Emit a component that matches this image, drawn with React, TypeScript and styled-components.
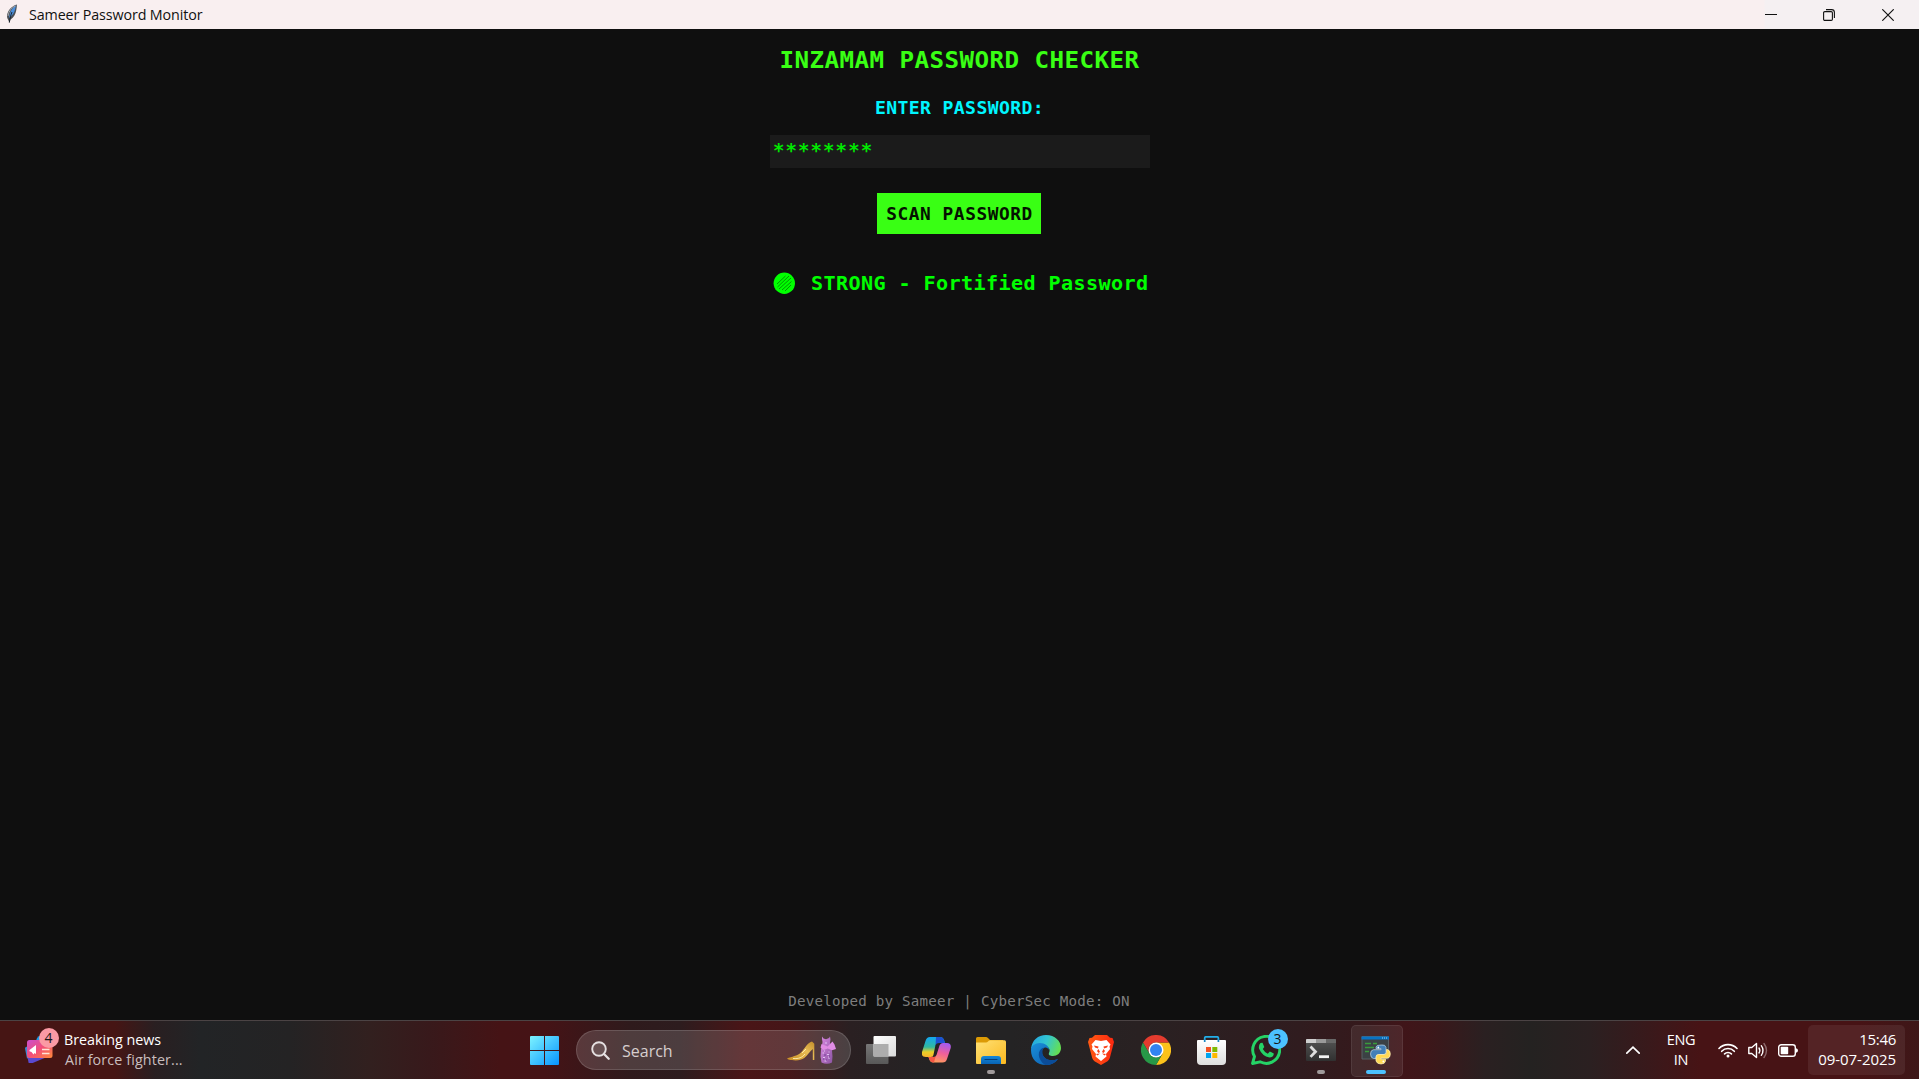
import React from 'react';
import styled, { createGlobalStyle } from 'styled-components';

const GlobalStyle = createGlobalStyle`
  * { box-sizing: border-box; }
  body { margin: 0; background: #0f0f0f; overflow: hidden; }
  svg { display: block; flex: none; }
`;

const uiFont = `'Open Sans', 'Noto Sans', sans-serif`;
const monoFont = `'DejaVu Sans Mono', 'Liberation Mono', monospace`;

const Desktop = styled.div`
  width: 1919px;
  height: 1079px;
  display: flex;
  flex-direction: column;
  font-family: ${uiFont};
`;

const TitleBar = styled.header`
  height: 29px;
  flex: none;
  display: flex;
  align-items: center;
  padding-right: 2px;
  background: linear-gradient(90deg, #f9eff0 0 1764px, #f5f0f2 1765px);
`;

const TitleFeather = styled.div`
  margin: -2px 0 0 6px;
`;

const WindowTitle = styled.span`
  margin-left: 11px;
  color: #111;
  font-size: 14.3px;
  line-height: 20px;
  letter-spacing: -0.12px;
  white-space: nowrap;
`;

const WindowControls = styled.div`
  margin-left: auto;
  display: flex;
  height: 28px;
`;

const ControlButton = styled.button`
  width: 58.5px;
  padding: 0;
  border: 0;
  background: none;
  display: flex;
  align-items: center;
  justify-content: center;
`;

const AppBody = styled.main`
  flex: 1;
  min-height: 0;
  padding: 16px 1px 9px 0;
  background: #0f0f0f;
  display: flex;
  flex-direction: column;
  align-items: center;
`;

const Mono = styled.div<{ $size: number; $pitch: number; $bold?: boolean }>`
  margin: 0;
  font-family: ${monoFont};
  font-size: ${(p) => p.$size}px;
  letter-spacing: ${(p) => (p.$pitch - p.$size * 0.602).toFixed(3)}px;
  font-weight: ${(p) => (p.$bold ? 700 : 400)};
  white-space: pre;
`;

const Heading = styled(Mono)`
  line-height: 33px;
  height: 33px;
  padding-left: 1px;
  color: #39ff14;
  transform: scaleY(0.92);
`;

const FieldLabel = styled(Mono)`
  margin-top: 15px;
  padding-left: 1px;
  line-height: 30px;
  color: #00f6ff;
  transform: scaleY(0.95);
`;

const PasswordBox = styled(Mono)`
  margin: 12px 0 0 2px;
  width: 380px;
  height: 33px;
  padding: 0 3px;
  line-height: 31px;
  color: #00e800;
  background: #1b1b1b;
`;

const ScanButton = styled(Mono)`
  margin-top: 25px;
  width: 164px;
  height: 41px;
  padding-left: 1px;
  line-height: 42px;
  text-align: center;
  color: #041200;
  background: #39ff14;
`;

const Result = styled.div`
  margin-top: 34px;
  height: 30px;
  width: 372px;
  display: flex;
  align-items: center;
`;

const ResultText = styled(Mono)`
  margin-left: 16px;
  line-height: 30px;
  color: #00ff00;
`;

const Credit = styled(Mono)`
  margin-top: auto;
  line-height: 20px;
  color: #7e7e7e;
`;

const Taskbar = styled.footer`
  height: 59px;
  flex: none;
  display: flex;
  border-top: 1px solid #4b4344;
  background: linear-gradient(
    90deg,
    #461514 0, #461514 115px, #291f21 155px, #222426 200px, #242324 290px,
    #32201f 370px, #38191b 430px, #451315 500px, #451316 545px, #2f1a1c 630px,
    #2d1c1e 680px, #4a1517 745px, #451618 790px, #2a2022 850px, #242324 930px,
    #242324 1010px, #292122 1140px, #301c1f 1300px, #35191c 1360px,
    #401519 1405px, #3c171a 1430px, #2a2021 1485px, #242221 1530px,
    #2b2021 1590px, #371a1c 1640px, #471315 1700px, #471315 1860px, #3e1718 1919px
  );
`;

const Widgets = styled.div`
  width: 517px;
  display: flex;
  padding-left: 25px;
`;

const NewsIcon = styled.div`
  position: relative;
  width: 28px;
  height: 28px;
  margin-top: 14px;
`;

const Badge = styled.span<{ $color: string; $x: number; $y: number }>`
  position: absolute;
  left: ${(p) => p.$x}px;
  top: ${(p) => p.$y}px;
  width: 20px;
  height: 20px;
  border-radius: 50%;
  background: ${(p) => p.$color};
  color: #171717;
  font-size: 14px;
  line-height: 20px;
  text-align: center;
`;

const NewsText = styled.div`
  margin: 9px 0 0 11px;
  font-size: 14.3px;
  line-height: 20px;
  color: #fff;
  white-space: nowrap;
`;

const Headline = styled.div<{ $dim?: boolean; $track: number }>`
  color: ${(p) => (p.$dim ? '#c9bebe' : '#ffffff')};
  letter-spacing: ${(p) => p.$track}px;
  padding-left: ${(p) => (p.$dim ? 1 : 0)}px;
`;

const Apps = styled.nav`
  display: flex;
  height: 58px;
`;

const AppSlot = styled.div<{ $active?: boolean }>`
  position: relative;
  width: 55px;
  display: flex;
  align-items: center;
  justify-content: center;
  &::before {
    content: '';
    display: ${(p) => (p.$active ? 'block' : 'none')};
    position: absolute;
    left: 2px;
    top: 4px;
    width: 50px;
    height: 50px;
    border-radius: 5px;
    border: 1px solid rgba(255, 255, 255, 0.08);
    background: rgba(255, 255, 255, 0.075);
  }
  > svg { position: relative; }
`;

const Indicator = styled.span<{ $active?: boolean }>`
  position: absolute;
  top: 49px;
  left: ${(p) => (p.$active ? 17 : 23.5)}px;
  width: ${(p) => (p.$active ? 20 : 8)}px;
  height: 4px;
  border-radius: 2px;
  background: ${(p) => (p.$active ? '#4cc2ff' : '#a09a9b')};
`;

const SearchBox = styled.div`
  width: 275px;
  height: 40px;
  margin: 9px 2.5px 0 4px;
  padding: 0 14px;
  display: flex;
  align-items: center;
  border: 1px solid rgba(255, 255, 255, 0.14);
  border-radius: 20px;
  background: rgba(255, 255, 255, 0.15);
  color: #d6cece;
  font-size: 16px;
`;

const SearchLabel = styled.span`
  margin: 2px auto 0 12px;
`;

const Tray = styled.div`
  margin-left: auto;
  display: flex;
  align-items: flex-start;
  color: #fff;
  font-size: 15px;
  line-height: 20px;
`;

const TrayIcon = styled.div<{ $gap: number }>`
  height: 58px;
  display: flex;
  align-items: center;
  margin-right: ${(p) => p.$gap}px;
`;

const Language = styled.div`
  width: 44px;
  margin: 9px 15px 0 0;
  text-align: center;
  line-height: 20px;
  font-size: 14.5px;
  letter-spacing: -0.3px;
`;

const Clock = styled.div`
  width: 97px;
  height: 50px;
  margin: 4px 14px 0 0;
  padding: 4px 9px 0 0;
  text-align: right;
  border-radius: 5px;
  background: rgba(255, 255, 255, 0.07);
  white-space: nowrap;
`;

const ClockLine = styled.div<{ $track: number }>`
  letter-spacing: ${(p) => p.$track}px;
`;

const Feather = () => (
  <svg width="12" height="20" viewBox="0 0 12 20">
    <path d="M10.8.5C7 1.5 2.7 5 1.3 10c-.6 2.5-.1 4.6 1 6L3.4 19l1-3.3C8 13.500 9.600 10 10.200 6.500 10.600 4 11 2 10.800.5Z" fill="#4a4f56" />
    <path d="M10 1.500C7 3 4.700 6 3.600 11l-.5 3C6.500 11.500 8.700 8 9.200 5Z" fill="#4a8edb" />
    <path d="M9.500 1.800C5.500 3.600 2.700 7 2 12" fill="none" stroke="#a5a9ae" strokeWidth="1" />
    <path d="M6 8C4.800 11 4 14 3.300 18.500" fill="none" stroke="#111820" strokeWidth=".9" />
  </svg>
);

const NewsArt = () => (
  <svg width="28" height="28" viewBox="0 0 28 28">
    <defs>
      <linearGradient id="news" x1="0" y1="0" x2="1" y2="1">
        <stop offset="0" stopColor="#c94fd0" /><stop offset=".5" stopColor="#f34f79" /><stop offset="1" stopColor="#ff8a38" />
      </linearGradient>
    </defs>
    <path d="M1 13h6l15 9-16 6.700a2 2 0 0 1-2.500-1.300Z" fill="#5a4ad0" />
    <path d="M0 13.500q0-2 3-2l2 11-3 1Z" fill="#3b8bd4" />
    <path d="M11 6q1-6 7-6v8Z" fill="#1c9de8" />
    <rect x="2" y="5" width="25.500" height="18" rx="2.500" fill="url(#news)" />
    <path d="m4.500 15 6.500-5v9l-1.500-1-1 1.500-2-2.500-2-.7Z" fill="#fff" />
    <path d="M17 14.500h7.500M17 18.500h7.500" stroke="#ffe3d6" strokeWidth="1.600" />
  </svg>
);

const StartIcon = () => (
  <svg width="29" height="29" viewBox="0 0 29 29">
    <defs>
      <linearGradient id="win" x1="0" y1="0" x2="29" y2="29" gradientUnits="userSpaceOnUse">
        <stop offset="0" stopColor="#7df3ff" /><stop offset="1" stopColor="#0794ff" />
      </linearGradient>
    </defs>
    <path d="M0 1q0-1 1-1h13v14H0ZM15 0h13q1 0 1 1v13H15ZM0 15h14v14H1q-1 0-1-1ZM15 15h14v13q0 1-1 1H15Z" fill="url(#win)" />
  </svg>
);

const SearchIcon = () => (
  <svg width="19" height="19" viewBox="0 0 19 19" fill="none" stroke="#e5e0e1">
    <circle cx="8" cy="8" r="6.800" strokeWidth="1.900" fill="rgba(255,255,255,.12)" />
    <path d="m13 13 4.700 4.700" strokeWidth="2.300" strokeLinecap="round" />
  </svg>
);

const FashionArt = () => (
  <svg width="49" height="29" viewBox="0 0 49 29">
    <defs>
      <linearGradient id="shoe" x1="0" y1="1" x2="1" y2="0">
        <stop offset="0" stopColor="#c88c22" /><stop offset=".6" stopColor="#e8bd55" /><stop offset="1" stopColor="#c28d2a" />
      </linearGradient>
      <linearGradient id="dress" x1="0" y1="0" x2="1" y2="1">
        <stop offset="0" stopColor="#d988e2" /><stop offset="1" stopColor="#8c55a3" />
      </linearGradient>
    </defs>
    <path d="M0 22.500C5 20.500 10 20 14 16.500 18 12.500 20 7 25 5.500l2.300 2.300V24H25.800V13c-3 2-5 6.500-8.500 9-3 2.200-8.300 3-12.300 2-2 0-4-.5-5-1.500Z" fill="url(#shoe)" />
    <path d="M6 22.500c6 .5 9-1 12-4.500M15 17l4-4" stroke="#fff0b0" fill="none" strokeWidth=".9" />
    <path d="m35 .5 1.500 2 2.500.7 3-1.200L43 .5l.5 3L43 6.500l1 4 1 4 .5 6-.5 6q-5 2.500-10.500 0l-1-6 .5-7 1-4 .5-3.500-.5-3Z" fill="url(#dress)" />
    <path d="m40.500 10.500 5-5 2 3 1.500 4.500-4 1.200-4.300-1.700-4.200 1.500-3-2.500 1-3.500Z" fill="#e08ce4" />
    <path d="M35.500 17h1.500m3 1.500h2m-6 3h2m3.500 1h1m-5 2.500h2m2-9h1M38 7h2m-3 8h1m3 6h1" stroke="#e1c2f5" strokeWidth="1" />
    <path d="M37 19h2m-3 4h1m5-3h1m-4 4h1" stroke="#70439a" strokeWidth="1" />
  </svg>
);

const TaskViewIcon = () => (
  <svg width="30" height="28" viewBox="0 0 30 28">
    <defs>
      <linearGradient id="tv" x1="0" y1="0" x2="1" y2="1"><stop offset="0" stopColor="#fff" /><stop offset="1" stopColor="#dadada" /></linearGradient>
      <linearGradient id="tvb" x1="0" y1="0" x2="0" y2="1"><stop offset="0" stopColor="#777" /><stop offset="1" stopColor="#585858" /></linearGradient>
    </defs>
    <rect y="8" width="22.500" height="20" rx="1" fill="url(#tvb)" />
    <rect x="7.500" width="22.500" height="20.500" rx="1" fill="url(#tv)" />
    <path d="M7.500 8h15v12.500h-15Z" fill="#adadad" />
  </svg>
);

const CopilotIcon = () => (
  <svg width="29" height="26" viewBox="0 0 29 26">
    <defs>
      <linearGradient id="ca" x1="0" y1="0" x2="0" y2="1"><stop offset="0" stopColor="#13a7f2" /><stop offset=".5" stopColor="#31b9a0" /><stop offset=".75" stopColor="#e9cf28" /><stop offset="1" stopColor="#f9b32b" /></linearGradient>
      <linearGradient id="cb" x1=".7" y1="0" x2=".4" y2="1"><stop offset="0" stopColor="#a45bf0" /><stop offset=".5" stopColor="#ee5f9b" /><stop offset="1" stopColor="#ff9a5c" /></linearGradient>
    </defs>
    <path d="M8 0h10q3 0 4 3l1 3h-4q-3 0-4 3l-3 9q-1 2-3 2H4q-5 0-4-5L3.500 4Q4.600 0 8 0Z" fill="url(#ca)" />
    <path d="M14 0h4q3 0 4 3l1 3h-5q-3 0-4.500 3Z" fill="#1d50d2" />
    <path d="M21 6h4q4.500 0 3.700 5L25 22q-1 3.500-4.500 3.500H11q-3 0-4-4L6.500 20H10q3 0 4-3l3-9q1-2 4-2Z" fill="url(#cb)" />
    <path d="M6.500 20H10q3 0 4-2l-2 7.500q-3.500 0-4.700-3.500Z" fill="#f55745" />
    <path d="M13.500 8q1-2 3.500-2h2.500q-1.500 1-2 2.500L14.500 18q-.7 2-3.500 2Z" fill="#252326" />
  </svg>
);

const FolderIcon = () => (
  <svg width="30" height="27" viewBox="0 0 30 27">
    <defs>
      <linearGradient id="fold" x1="0" y1="0" x2="1" y2="1"><stop offset="0" stopColor="#ffe176" /><stop offset="1" stopColor="#fbb91f" /></linearGradient>
      <linearGradient id="foldb" x1="0" y1="0" x2="0" y2="1"><stop offset="0" stopColor="#1687d9" /><stop offset="1" stopColor="#0864b5" /></linearGradient>
    </defs>
    <path d="M0 1.500Q0 0 1.500 0H10q1 0 2 1l2 2h13v6H0Z" fill="#dc9a05" />
    <path d="M0 5.500h10q1.300 0 2-1t2-1.200h14.500Q30 3.300 30 5v21q0 1-1 1H1q-1 0-1-1Z" fill="url(#fold)" />
    <path d="M5 27v-5q0-3 3-3h14q3 0 3 3v5Z" fill="url(#foldb)" />
    <path d="M9 22.500h12" stroke="#063f7b" strokeWidth="1.200" strokeLinecap="round" />
  </svg>
);

const EdgeIcon = () => (
  <svg width="30" height="30" viewBox="0 0 30 30">
    <defs>
      <linearGradient id="eg" x1="0" y1=".2" x2="1" y2=".5"><stop offset="0" stopColor="#22a5e2" /><stop offset=".5" stopColor="#33c5d1" /><stop offset="1" stopColor="#64df53" /></linearGradient>
      <linearGradient id="eb" x1="0" y1="0" x2="1" y2="1"><stop offset="0" stopColor="#1a8fda" /><stop offset="1" stopColor="#0c5bad" /></linearGradient>
    </defs>
    <path d="M0 14C1 5 7 0 15 0c9 0 15 6 15 13 0 5-4 8-8 8-3 0-5-1-4-3 2-4-1-7-5-7C7 9 2 11 0 14Z" fill="url(#eg)" />
    <path d="M0 15c0-4 4-7 9-7 5 0 9 3 9 7-1-2-3-3-5-2-3 2-3 6 0 9 3 4 9 4 14 2-3 4-7 6-12 6C6 30 0 24 0 15Z" fill="url(#eb)" />
    <path d="M12.500 12.500C6 15 6 24 14 30h1c5 0 9-2 12-6-8 3-15 0-15.500-6-.2-2 .3-4 1-5.500Z" fill="#0b4c98" />
  </svg>
);

const BraveIcon = () => (
  <svg width="26" height="30" viewBox="0 0 26 30">
    <defs><linearGradient id="br"><stop offset="0" stopColor="#ff5a13" /><stop offset="1" stopColor="#fb2810" /></linearGradient></defs>
    <path d="M7 0h12l3 2.800 2.500.3L26 7l-.8 3-3.400 13q-.6 2-2.300 3.200L13 30l-6.500-3.800Q4.800 25 4.200 23L.8 10 0 7l1.500-3.900L4 2.800Z" fill="url(#br)" />
    <path d="m7.500 5 5.500 1 5.500-1 4 4.500-1 2 .5 2.500-4 5 .5 2.500L13 26l-5.500-4.500L8 19l-4-5 .5-2.500-1-2Z" fill="#fff" />
    <path d="m6 10.500 4.500 1-.5 2-3-1ZM20 10.500l-4.500 1 .5 2 3-1ZM10.500 14l1.500 3-1.500 1-1.500-2ZM15.500 14 14 17l1.500 1 1.500-2ZM8 19l4-.5-2.500 2ZM18 19l-4-.5 2.500 2Z" fill="#fa4219" />
  </svg>
);

const ChromeIcon = () => (
  <svg width="30" height="30" viewBox="0 0 48 48">
    <path d="M24 12h20.800A24 24 0 0 1 24 48l10.400-18Z" fill="#fcc21b" />
    <path d="M3.200 12 13.600 30A12 12 0 0 1 24 12h20.800A24 24 0 0 0 3.200 12Z" fill="#e33b2e" />
    <path d="M3.200 12 13.600 30A12 12 0 0 0 34.400 30L24 48A24 24 0 0 1 3.200 12Z" fill="#279847" />
    <circle cx="24" cy="24" r="12" fill="#fff" />
    <circle cx="24" cy="24" r="9.600" fill="#3183f1" />
  </svg>
);

const StoreIcon = () => (
  <svg width="29" height="29" viewBox="0 0 29 29">
    <defs><linearGradient id="st" x1="0" y1="0" x2="0" y2="1"><stop offset="0" stopColor="#fff" /><stop offset="1" stopColor="#dedede" /></linearGradient></defs>
    <path d="M7.700 6V2q0-1.200 1.200-1.200h11.300q1.200 0 1.200 1.200v4" fill="none" stroke="#22aee8" strokeWidth="1.700" />
    <path d="M0 5q0-1 1-1h27q1 0 1 1v20q0 4-4 4H4q-4 0-4-4Z" fill="url(#st)" />
    <path d="M7.700 3.500v2.500M21.400 3.500v2.500" stroke="#1688c5" strokeWidth="1.700" />
    <path d="M9 11h5v5H9Z" fill="#f25022" /><path d="M15.300 11h5v5h-5Z" fill="#7fba00" />
    <path d="M9 17h5v5H9Z" fill="#00a4ef" /><path d="M15.300 17h5v5h-5Z" fill="#ffb900" />
  </svg>
);

const WhatsAppIcon = () => (
  <svg width="30" height="30" viewBox="0 0 30 30">
    <path d="m1.500 28.500 2-7A13.500 13.500 0 1 1 9 26.800Z" fill="none" stroke="#25d366" strokeWidth="2.900" strokeLinejoin="round" />
    <path d="m9.500 8 2-.3 1.800 4.200-1.500 2.200q1.700 3.300 5 4.600l2-2.200 4 2q0 3.500-4.300 4Q11 21 8 13.500 7.400 10 9.500 8Z" fill="#25d366" />
  </svg>
);

const TerminalIcon = () => (
  <svg width="30" height="22" viewBox="0 0 30 22">
    <defs><linearGradient id="te" x1="0" y1="0" x2="0" y2="1"><stop offset="0" stopColor="#555" /><stop offset="1" stopColor="#303030" /></linearGradient></defs>
    <rect width="30" height="22" rx="1" fill="url(#te)" />
    <path d="M0 4V1q0-1 1-1h9v4Z" fill="#cfcfcf" /><path d="M10 0h10v4H10Z" fill="#9a9a9a" /><path d="M20 0h9q1 0 1 1v3H20Z" fill="#686868" />
    <path d="m4.500 7.500 5 5.200-5 5.200" fill="none" stroke="#ddd" strokeWidth="2.800" />
    <path d="M13 17.700h10" stroke="#f4f4f4" strokeWidth="2.800" />
  </svg>
);

const PythonWindowIcon = () => (
  <svg width="30" height="30" viewBox="0 0 30 30">
    <path d="M1 1.500h26.500V24H1Z" fill="#3b4144" stroke="#596064" />
    <path d="M.5 1.500H28v3H.5Z" fill="#0873c4" /><path d="M21 3h1m1 0h1m1 0h1" stroke="#a5d5f5" strokeWidth="1" />
    <path d="M4 8.500h6m2 0h4M4 12.500h9M4 16.500h4" stroke="#3a9b3c" strokeWidth="1.300" />
    <path d="M20 10q4.500-.7 5 2.500v5q0 2-2 2h-5q-3 0-3 3v1h-2.500q-3-.5-3-4.500t3-4.300H20v-1h-5V12q0-2 5-2Z" fill="#4380b7" stroke="#bfd6e5" strokeWidth=".7" />
    <path d="M25.500 14.500h1q2.800.8 2.800 4.500 0 4-3 4.200H20v1h4.500V26q-.5 3-4.500 3t-5-3v-4q0-2.500 2.500-2.500H23q2.500 0 2.500-2.500Z" fill="#ffd953" stroke="#fff3bd" strokeWidth=".7" />
    <circle cx="17.300" cy="12.500" r=".9" fill="#fff" /><circle cx="22.300" cy="26.500" r=".9" fill="#fff" />
  </svg>
);

const ResultDot = () => (
  <svg width="22" height="22" viewBox="0 0 22 22">
    <circle cx="11.300" cy="11.300" r="10.700" fill="#00ff00" />
    <path d="M4 12 12.500 4M4.500 15 16 4M6 17 18 6M9 18 18.500 9.500M12 19l6-6" stroke="#008a00" strokeWidth=".9" />
  </svg>
);

const apps = [
  { name: 'task-view', icon: <TaskViewIcon /> },
  { name: 'copilot', icon: <CopilotIcon /> },
  { name: 'explorer', icon: <FolderIcon />, running: true },
  { name: 'edge', icon: <EdgeIcon /> },
  { name: 'brave', icon: <BraveIcon /> },
  { name: 'chrome', icon: <ChromeIcon /> },
  { name: 'store', icon: <StoreIcon /> },
  { name: 'whatsapp', icon: <WhatsAppIcon />, badge: '3' },
  { name: 'terminal', icon: <TerminalIcon />, running: true },
  { name: 'python', icon: <PythonWindowIcon />, running: true, active: true },
];

export default function App() {
  return (
    <Desktop>
      <GlobalStyle />
      <TitleBar>
        <TitleFeather><Feather /></TitleFeather>
        <WindowTitle>Sameer Password Monitor</WindowTitle>
        <WindowControls>
          <ControlButton aria-label="Minimize">
            <svg width="12" height="12" viewBox="0 0 12 12"><path d="M0 5.500h12" stroke="#111" /></svg>
          </ControlButton>
          <ControlButton aria-label="Restore">
            <svg width="12" height="12" viewBox="0 0 12 12" fill="none" stroke="#111" strokeWidth="1.100">
              <rect x=".6" y="2.600" width="8.800" height="8.800" rx="1.200" />
              <path d="M3 .6h5.600q2.800 0 2.800 2.800V9" />
            </svg>
          </ControlButton>
          <ControlButton aria-label="Close">
            <svg width="12" height="12" viewBox="0 0 12 12"><path d="m.3.3 11.400 11.400M11.700.3.3 11.700" stroke="#111" strokeWidth="1.150" /></svg>
          </ControlButton>
        </WindowControls>
      </TitleBar>

      <AppBody>
        <Heading as="h1" $size={24.2} $pitch={15} $bold>INZAMAM PASSWORD CHECKER</Heading>
        <FieldLabel $size={18.1} $pitch={11.27} $bold>ENTER PASSWORD:</FieldLabel>
        <PasswordBox $size={19} $pitch={12.52} $bold>********</PasswordBox>
        <ScanButton $size={17.8} $pitch={11.27} $bold>SCAN PASSWORD</ScanButton>
        <Result>
          <ResultDot />
          <ResultText $size={20.1} $pitch={12.5} $bold>STRONG - Fortified Password</ResultText>
        </Result>
        <Credit $size={14.2} $pitch={8.76}>Developed by Sameer | CyberSec Mode: ON</Credit>
      </AppBody>

      <Taskbar>
        <Widgets>
          <NewsIcon>
            <NewsArt />
            <Badge $color="#fb9aa4" $x={13.5} $y={-7}>4</Badge>
          </NewsIcon>
          <NewsText>
            <Headline $track={0}>Breaking news</Headline>
            <Headline $dim $track={0.12}>Air force fighter...</Headline>
          </NewsText>
        </Widgets>
        <Apps>
          <AppSlot><StartIcon /></AppSlot>
          <SearchBox>
            <SearchIcon />
            <SearchLabel>Search</SearchLabel>
            <FashionArt />
          </SearchBox>
          {apps.map((app) => (
            <AppSlot key={app.name} $active={app.active}>
              {app.icon}
              {app.badge && <Badge $color="#4cc2ff" $x={29} $y={8}>{app.badge}</Badge>}
              {app.running && <Indicator $active={app.active} />}
            </AppSlot>
          ))}
        </Apps>
        <Tray>
          <TrayIcon $gap={19}>
            <svg width="14" height="8" viewBox="0 0 14 8"><path d="m.8 7.200 6.200-6 6.200 6" fill="none" stroke="#fff" strokeWidth="1.700" strokeLinecap="round" /></svg>
          </TrayIcon>
          <Language>
            <div>ENG</div>
            <div>IN</div>
          </Language>
          <TrayIcon $gap={10}>
            <svg width="20" height="15" viewBox="0 0 20 15" fill="none" stroke="#fff" strokeWidth="1.600" strokeLinecap="round">
              <path d="M1 5.500a12.300 12.300 0 0 1 18 0M3.700 8.300a8.600 8.600 0 0 1 12.600 0M6.600 10.900a4.800 4.800 0 0 1 6.800 0" />
              <circle cx="10" cy="13" r="1.500" fill="#fff" stroke="none" />
            </svg>
          </TrayIcon>
          <TrayIcon $gap={10}>
            <svg width="20" height="17" viewBox="0 0 20 17" fill="none" stroke="#fff" strokeWidth="1.400" strokeLinecap="round" strokeLinejoin="round">
              <path d="M.8 5.500h3L8.500 1.500v14L3.800 11.500h-3Z" />
              <path d="M11 6q1.700 2.500 0 5M13.300 3.700q3.500 4.800 0 9.600" />
              <path d="M16 1.500q5 7 0 14" stroke="#8c696b" />
            </svg>
          </TrayIcon>
          <TrayIcon $gap={10}>
            <svg width="20" height="13" viewBox="0 0 20 13">
              <rect x=".7" y=".7" width="16.600" height="11.600" rx="2.600" fill="none" stroke="#fff" strokeWidth="1.400" />
              <rect x="2.700" y="2.700" width="7.500" height="7.600" rx=".8" fill="#fff" />
              <path d="M18 4.300q2 .3 2 2.200t-2 2.200Z" fill="#fff" />
            </svg>
          </TrayIcon>
          <Clock>
            <ClockLine $track={-0.3}>15:46</ClockLine>
            <ClockLine $track={-0.05}>09-07-2025</ClockLine>
          </Clock>
        </Tray>
      </Taskbar>
    </Desktop>
  );
}
